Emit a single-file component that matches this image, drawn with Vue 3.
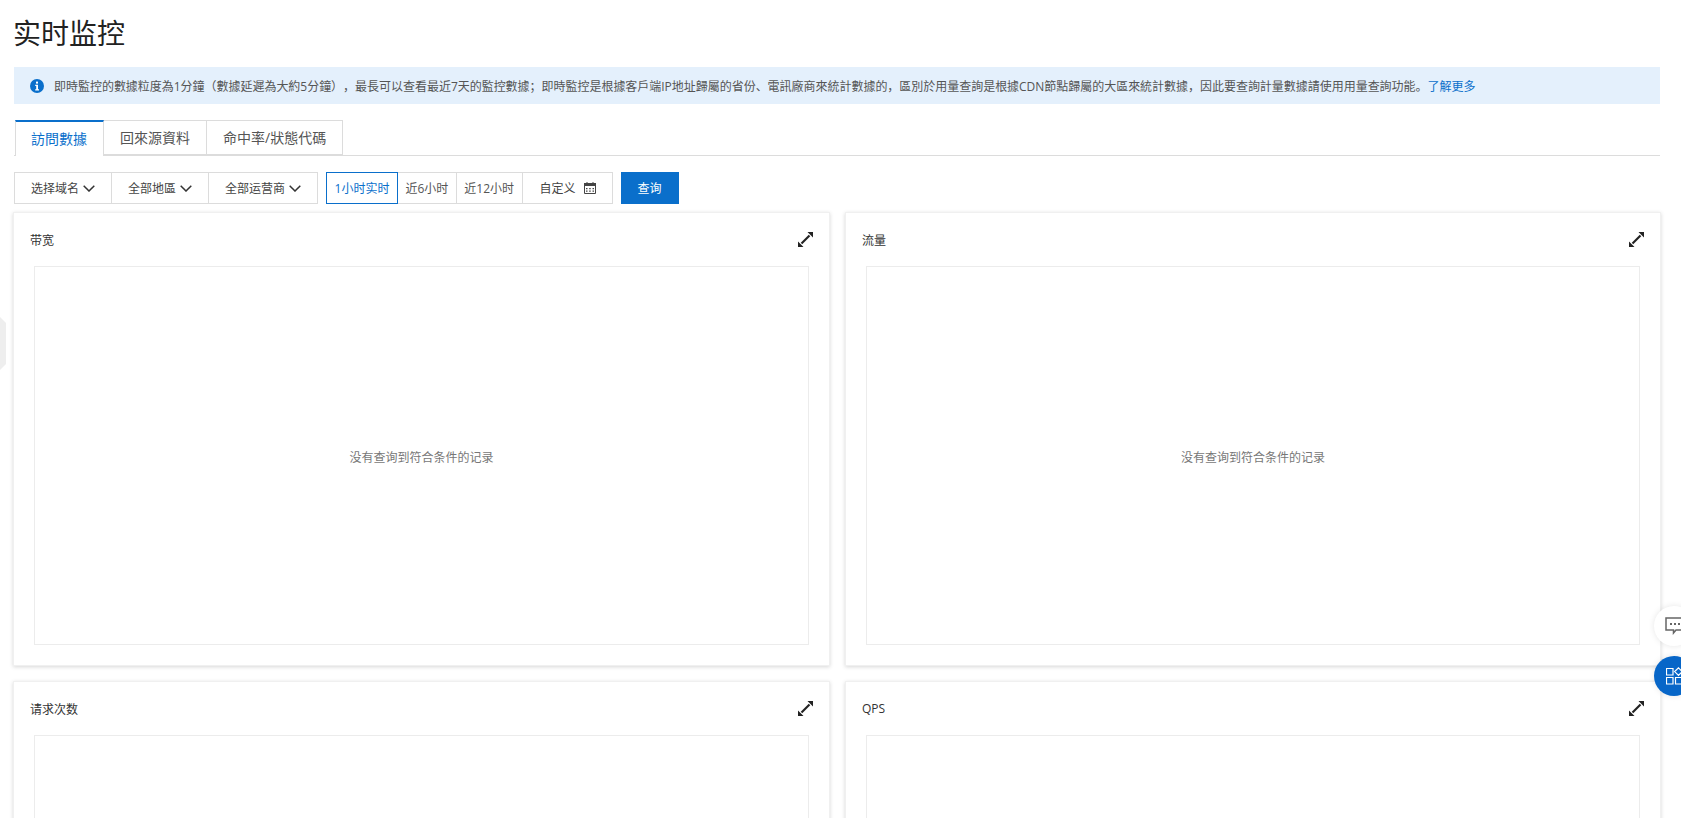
<script setup>
const selects = ['选择域名', '全部地區', '全部运营商']
const tabs = ['訪問數據', '回來源資料', '命中率/狀態代碼']
const ranges = ['1小时实时', '近6小时', '近12小时']
const charts = ['带宽', '流量', '请求次数', 'QPS']
</script>

<template>
  <div class="page">
    <h1 class="title">实时监控</h1>

    <div class="notice">
      <svg class="info" viewBox="0 0 14 14" width="14" height="14">
        <circle cx="7" cy="7" r="7" fill="#0a6fcb" />
        <rect x="6" y="2.6" width="2" height="2" fill="#fff" />
        <path d="M5.2 5.8H8v4.4h1v1.2H5.2v-1.2h1V7H5.2z" fill="#fff" />
      </svg>
      <span class="notice-text">即時監控的數據粒度為1分鐘（數據延遲為大約5分鐘），最長可以查看最近7天的監控數據；即時監控是根據客戶端IP地址歸屬的省份、電訊廠商來統計數據的，區別於用量查詢是根據CDN節點歸屬的大區來統計數據，因此要查詢計量數據請使用用量查詢功能。<a class="more">了解更多</a></span>
    </div>

    <div class="tabs">
      <div v-for="(t, i) in tabs" :key="t" class="tab" :class="{ active: i === 0 }">{{ t }}</div>
    </div>

    <div class="filters">
      <div class="group">
        <div v-for="s in selects" :key="s" class="select">
          <span>{{ s }}</span>
          <svg viewBox="0 0 12 7" width="12" height="7" class="chev">
            <path d="M.7.7 6 6l5.3-5.3" fill="none" stroke="#333" stroke-width="1.5" />
          </svg>
        </div>
      </div>
      <div class="group ranges">
        <div v-for="(r, i) in ranges" :key="r" class="range" :class="{ on: i === 0 }">{{ r }}</div>
        <div class="range custom">
          <span>自定义</span>
          <svg viewBox="0 0 12 12" width="12" height="12">
            <path d="M.5 1.5h11v10H.5z" fill="none" stroke="#444" />
            <path d="M0 1h12v3H0zM2.5 0h1v2h-1zM8.500 0h1v2h-1z" fill="#444" />
            <path d="M2 6h1.500v1.200H2zM5.200 6h1.500v1.200H5.200zM8.500 6H10v1.200H8.500zM2 8.500h1.500v1.200H2zM5.200 8.500h1.500v1.200H5.200zM8.500 8.500H10v1.200H8.500z" fill="#444" />
          </svg>
        </div>
      </div>
      <button class="query">查询</button>
    </div>

    <div class="grid">
      <section v-for="(c, i) in charts" :key="c" class="card">
        <header class="card-head">
          <span>{{ c }}</span>
          <svg viewBox="0 0 15 15" width="15" height="15" class="expand">
            <path d="M3.500 11.500 11.500 3.500" stroke="#222" stroke-width="2.200" />
            <path d="M9.500 0H15v5.500zM0 9.500 5.500 15H0z" fill="#222" />
          </svg>
        </header>
        <div class="plot"><span v-if="i < 2">没有查询到符合条件的记录</span></div>
      </section>
    </div>

    <div class="handle"></div>

    <div class="float chat">
      <svg viewBox="0 0 20 18" width="20" height="18">
        <path d="M1 1h18v12H11l-2.500 3V13H1z" fill="none" stroke="#666" stroke-width="1.500" />
        <path d="M5 6h2v2H5zM9 6h2v2H9zM13 6h2v2h-2z" fill="#666" />
      </svg>
    </div>
    <div class="float apps">
      <svg viewBox="0 0 20 18" width="20" height="18">
        <path d="M.5 1.500h6.500V8H.5zM.5 10.500h6.500V17H.5zM9.500 10.500H16V17H9.500zM12.500 .8l3.800 3.800-3.800 3.800-3.800-3.800z" fill="none" stroke="#fff" stroke-width="1.200" />
      </svg>
    </div>
  </div>
</template>

<style scoped>
.page {
  position: relative;
  box-sizing: border-box;
  height: 818px;
  overflow: hidden;
  padding: 0 21px 0 14px;
  background: #fff;
  color: #333;
  font-family: "Open Sans", "Noto Sans CJK SC", sans-serif;
  font-size: 12px;
}
.title {
  margin: 0 0 0 -1px;
  height: 67px;
  padding-top: 13px;
  box-sizing: border-box;
  font-size: 28px;
  line-height: 40px;
  font-weight: 400;
  color: #222;
}
.notice {
  display: flex;
  align-items: center;
  gap: 10px;
  height: 37px;
  padding-left: 16px;
  background: #e4f0fc;
  color: #555;
  white-space: nowrap;
}
.notice-text { text-spacing-trim: space-all; letter-spacing: -0.025px; }
.info { flex: none; }
.more { color: #0a6fcb; }
.tabs {
  display: flex;
  margin-top: 16px;
  height: 35px;
  box-sizing: content-box;
  border-bottom: 1px solid #dcdcdc;
  padding-left: 1px;
}
.tab {
  box-sizing: border-box;
  height: 35px;
  padding: 0 16px;
  line-height: 33px;
  font-size: 14px;
  color: #555;
  border: 1px solid #dcdcdc;
  border-left: 0;
  white-space: nowrap;
}
.tab.active {
  height: 36px;
  background: #fff;
  color: #0a6fcb;
  border-top: 2px solid #0a6fcb;
  border-left: 1px solid #dcdcdc;
  border-bottom: 0;
  padding: 0 16px 0 15px;
}
.filters {
  display: flex;
  align-items: stretch;
  height: 32px;
  margin-top: 16px;
}
.group { display: flex; }
.select {
  display: flex;
  align-items: center;
  gap: 4px;
  padding: 0 16px 0 16px;
  border: 1px solid #dcdcdc;
  border-left-width: 0;
  color: #444;
  white-space: nowrap;
}
.select:first-child { border-left-width: 1px; }
.ranges { margin-left: 8px; }
.range {
  display: flex;
  align-items: center;
  box-sizing: border-box;
  padding: 0 7.5px;
  border: 1px solid #dcdcdc;
  border-left-width: 0;
  color: #555;
  white-space: nowrap;
}
.range.on {
  border: 1px solid #0a6fcb;
  color: #0a6fcb;
}
.custom {
  gap: 8px;
  width: 90px;
  padding: 0 0 0 17px;
  color: #444;
}
.query {
  width: 58px;
  margin-left: 8px;
  padding: 0;
  border: 0;
  background: #0a6fcb;
  color: #fff;
  font: inherit;
}
.grid {
  display: grid;
  grid-template-columns: 817px 816px;
  gap: 15px;
  margin: 8px 0 0 -1px;
}
.card {
  box-sizing: border-box;
  height: 454px;
  padding: 0 20px;
  border: 1px solid #f0f0f0;
  box-shadow: 0 1px 4px rgba(0, 0, 0, 0.16);
  background: #fff;
  display: flex;
  flex-direction: column;
}
.card-head {
  flex: none;
  display: flex;
  justify-content: space-between;
  align-items: center;
  height: 53px;
  margin: 0 -4px 0 -4px;
  color: #333;
}
.expand { display: block; }
.plot {
  height: 379px;
  flex: none;
  box-sizing: border-box;
  border: 1px solid #ececec;
  padding-top: 2px;
  display: flex;
  align-items: center;
  justify-content: center;
  color: #777;
}
.handle {
  position: absolute;
  left: 0;
  top: 317px;
  width: 6px;
  height: 53px;
  background: #eee;
  clip-path: polygon(0 0, 100% 6px, 100% calc(100% - 6px), 0 100%);
}
.float {
  position: absolute;
  left: 1654px;
  width: 40px;
  height: 40px;
  border-radius: 50%;
  box-shadow: 0 0 6px rgba(0, 0, 0, 0.1);
  display: flex;
  align-items: center;
  padding-left: 11px;
  box-sizing: border-box;
}
.chat { top: 606px; background: #fff; }
.apps { top: 656px; background: #0766c8; padding-left: 12px; }
</style>

<style>
html, body { margin: 0; overflow: hidden; background: #fff; }
</style>
